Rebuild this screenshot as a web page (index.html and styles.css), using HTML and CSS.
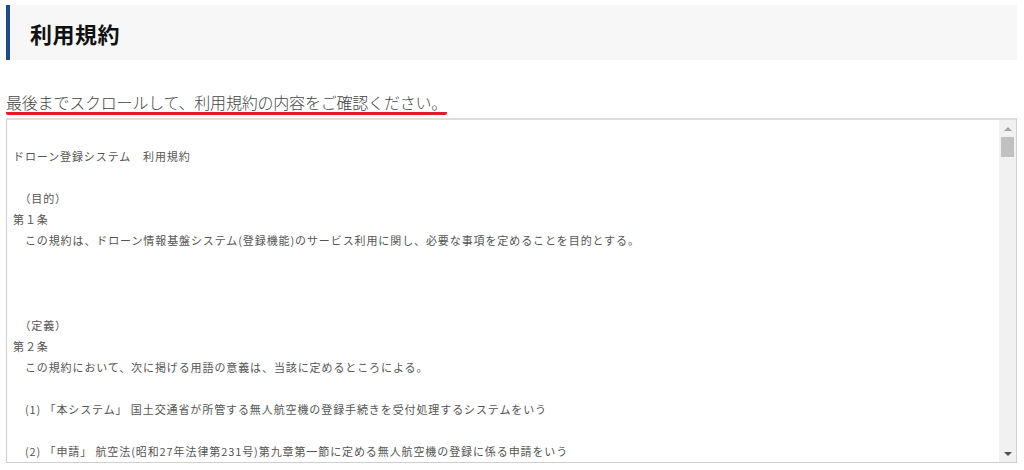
FILE: index.html
```html
<!DOCTYPE html>
<html lang="ja">
<head>
<meta charset="utf-8">
<title>利用規約</title>
<link rel="stylesheet" href="styles.css">
</head>
<body>
<div class="page">
  <header class="page-head">
    <h1 class="page-title">利用規約</h1>
  </header>
  <p class="notice"><span class="notice-text">最後までスクロールして、利用規約の内容をご確認ください。</span></p>
  <div class="terms">
    <div class="terms-body">
<div class="terms-text">
ドローン登録システム　利用規約

　（目的）
第１条
　この規約は、ドローン情報基盤システム(登録機能)のサービス利用に関し、必要な事項を定めることを目的とする。



　（定義）
第２条
　この規約において、次に掲げる用語の意義は、当該に定めるところによる。

　(1) 「本システム」 国土交通省が所管する無人航空機の登録手続きを受付処理するシステムをいう

　(2) 「申請」 航空法(昭和27年法律第231号)第九章第一節に定める無人航空機の登録に係る申請をいう</div>
    </div>
    <div class="scrollbar">
      <div class="sb-btn"><span class="arrow-up"></span></div>
      <div class="sb-thumb"></div>
      <div class="sb-track"></div>
      <div class="sb-btn"><span class="arrow-down"></span></div>
    </div>
  </div>
</div>
</body>
</html>
```

FILE: styles.css
```css
html, body {
  margin: 0;
  padding: 0;
  background: #ffffff;
}
body {
  font-family: "Noto Sans CJK JP", "Noto Sans", sans-serif;
  color: #333;
}
.page {
  padding: 5px 7px 0 6px;
}
.page-head {
  height: 55px;
  background: #f7f7f7;
  border-left: 4px solid #1d4c8c;
  display: flex;
  align-items: center;
  padding-left: 20px;
  box-sizing: border-box;
}
.page-title {
  margin: 0;
  font-size: 22px;
  font-weight: 700;
  color: #111;
  line-height: 1;
  letter-spacing: 0.5px;
}
.notice {
  margin: 0;
  padding-top: 32px;
  height: 26px;
  font-size: 16px;
  line-height: 20px;
  color: #444;
}
.notice-text {
  display: inline-block;
  border-bottom: 3px solid #e51a24;
  border-radius: 2px;
  padding-bottom: 1px;
  line-height: 17px;
  letter-spacing: -0.2px;
  font-weight: 300;
}
.terms {
  display: flex;
  height: 345px;
  box-sizing: border-box;
  border: 1px solid #cfcfcf;
  border-top: 2px solid #dedede;
}
.terms-body {
  flex: 1;
  overflow: hidden;
  padding: 5px 6px 0 6px;
}
.terms-text {
  white-space: pre-wrap;
  font-size: 11px;
  letter-spacing: 0.9px;
  line-height: 21.1px;
  color: #555;
}
.scrollbar {
  width: 17px;
  background: #f1f1f1;
  display: flex;
  flex-direction: column;
  align-items: center;
}
.sb-btn {
  height: 17px;
  width: 17px;
  display: flex;
  align-items: center;
  justify-content: center;
  flex: none;
}
.arrow-up {
  width: 0;
  height: 0;
  border-left: 4px solid transparent;
  border-right: 4px solid transparent;
  border-bottom: 4px solid #a3a3a3;
}
.arrow-down {
  width: 0;
  height: 0;
  border-left: 4px solid transparent;
  border-right: 4px solid transparent;
  border-top: 4px solid #505050;
}
.sb-thumb {
  width: 13px;
  height: 20px;
  background: #c1c1c1;
  flex: none;
}
.sb-track {
  flex: 1;
}
```
